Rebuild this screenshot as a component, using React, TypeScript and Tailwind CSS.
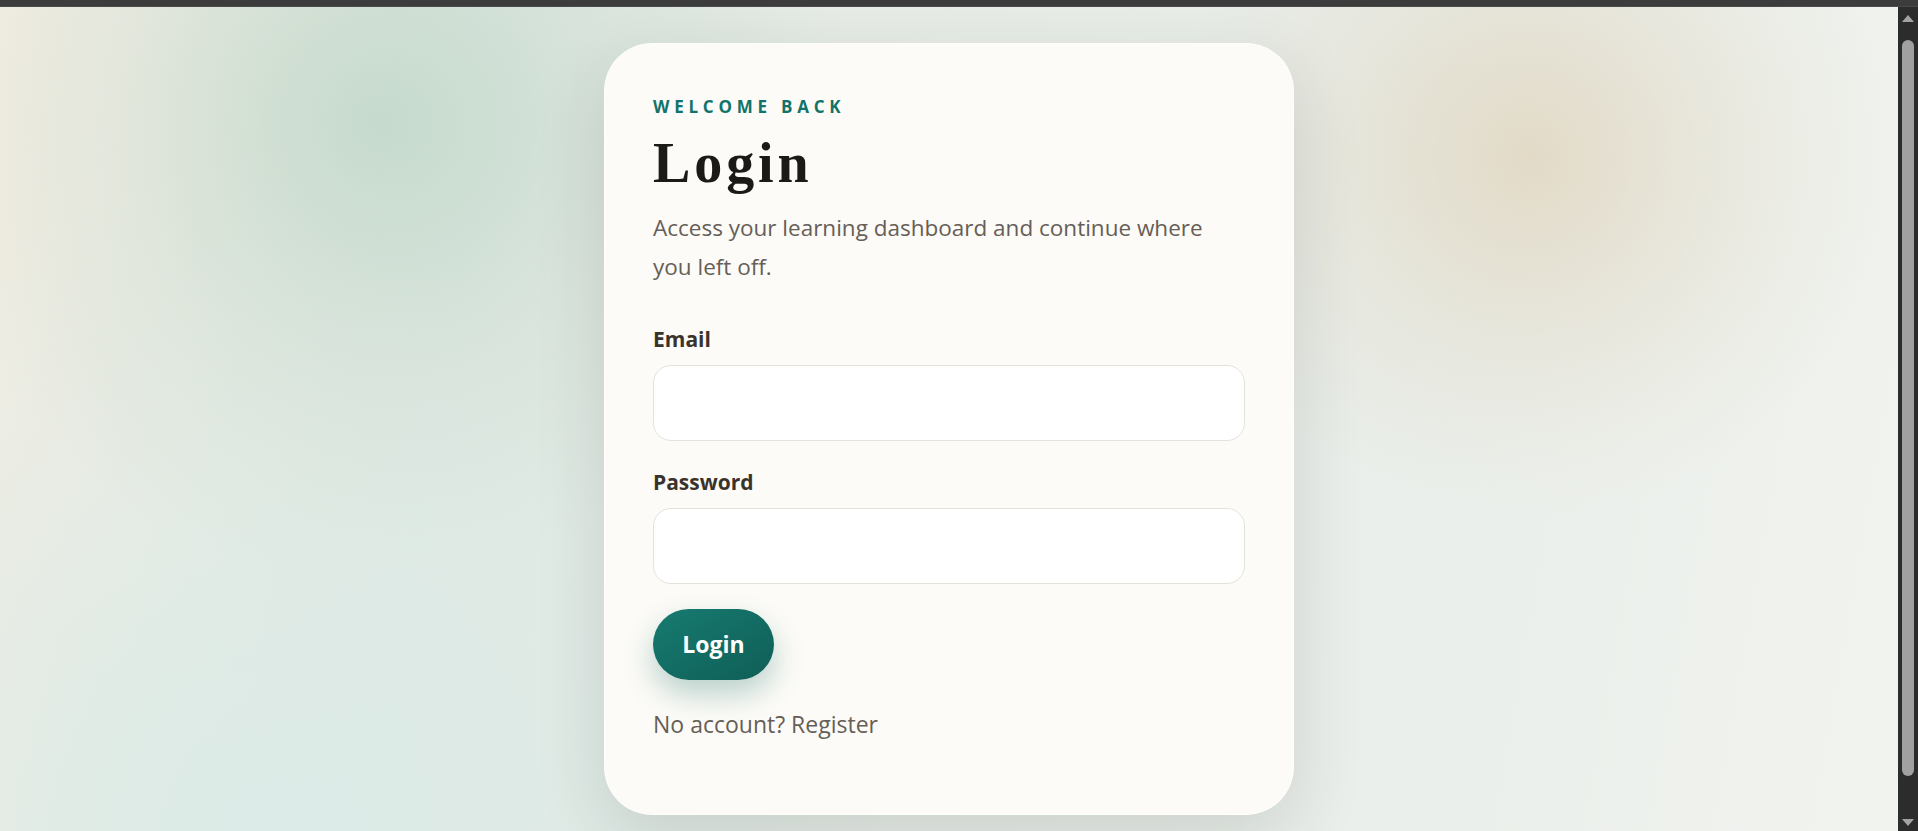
import React from 'react';

function FakeScrollbar() {
  return (
    <div className="w-[20px] h-full bg-[#2c2c2c] flex flex-col items-center">
      <svg width="14" height="9" viewBox="0 0 14 9" className="mt-[7px]">
        <path d="M7 1 L13 8 L1 8 Z" fill="#a3a3a3" />
      </svg>
      <div className="mt-[17px] w-[12px] h-[736px] rounded-full bg-[#a1a1a1]" />
      <div className="flex-1" />
      <svg width="14" height="9" viewBox="0 0 14 9" className="mb-[4px]">
        <path d="M1 1 L13 1 L7 8 Z" fill="#a3a3a3" />
      </svg>
    </div>
  );
}

function Field({ label, type, gap }: { label: string; type: string; gap: string }) {
  return (
    <div className={gap}>
      <label className="block text-[21px] leading-[28px] font-bold text-[#3a332c]">{label}</label>
      <input
        type={type}
        className="mt-[12px] block h-[76px] w-full rounded-[18px] border border-[#e5e2dc] bg-white px-5 text-[20px] outline-none"
      />
    </div>
  );
}

export default function App() {
  return (
    <div className="h-[831px] w-full overflow-hidden flex flex-col bg-[#2c2c2c] font-['Open_Sans',sans-serif]">
      <div className="h-[7px] bg-[#3c3c3c] border-b border-[#4a4a4a]" />
      <div className="flex flex-1 min-h-0">
        <main className="flex-1 flex justify-center items-start pt-[36px] overflow-hidden bg-[radial-gradient(460px_circle_at_380px_115px,rgba(175,207,190,0.6),rgba(195,216,203,0.3)_55%,transparent_100%),radial-gradient(360px_circle_at_1530px_150px,rgba(222,207,180,0.65),rgba(225,215,195,0.28)_60%,transparent_100%),radial-gradient(650px_circle_at_250px_830px,rgba(215,235,232,0.75),transparent_100%),linear-gradient(100deg,#f3ede2_0%,#e4eae4_25%,#e7ece7_50%,#eaefeb_75%,#f1f3ee_100%)]">
          <section className="w-[690px] rounded-[48px] border border-white/70 bg-[#fcfbf7] px-12 pt-[51px] pb-[70px] shadow-[0_24px_70px_rgba(35,45,35,0.14)]">
            <p className="text-[17px] leading-[24px] font-bold tracking-[0.28em] uppercase text-[#12736a]">
              Welcome back
            </p>
            <h1 className="mt-[14px] font-['Liberation_Serif',serif] text-[56px] leading-[60px] font-bold tracking-[0.07em] text-[#1b1a17]">
              Login
            </h1>
            <p className="mt-[15px] max-w-[580px] text-[22.5px] leading-[39px] text-[#665e57]">
              Access your learning dashboard and continue where you left off.
            </p>

            <form onSubmit={(e) => e.preventDefault()}>
              <Field label="Email" type="email" gap="mt-[39px]" />
              <Field label="Password" type="password" gap="mt-[27px]" />

              <button
                type="submit"
                className="mt-[25px] flex h-[71px] w-[121px] items-center justify-center rounded-full bg-gradient-to-br from-[#177b71] to-[#0f5e56] text-[23px] font-bold text-white shadow-[0_14px_30px_rgba(15,100,90,0.28)]"
              >
                Login
              </button>
            </form>

            <p className="mt-[25px] text-[23px] leading-[39px] text-[#665e57]">
              No account? Register
            </p>
          </section>
        </main>
        <FakeScrollbar />
      </div>
    </div>
  );
}
